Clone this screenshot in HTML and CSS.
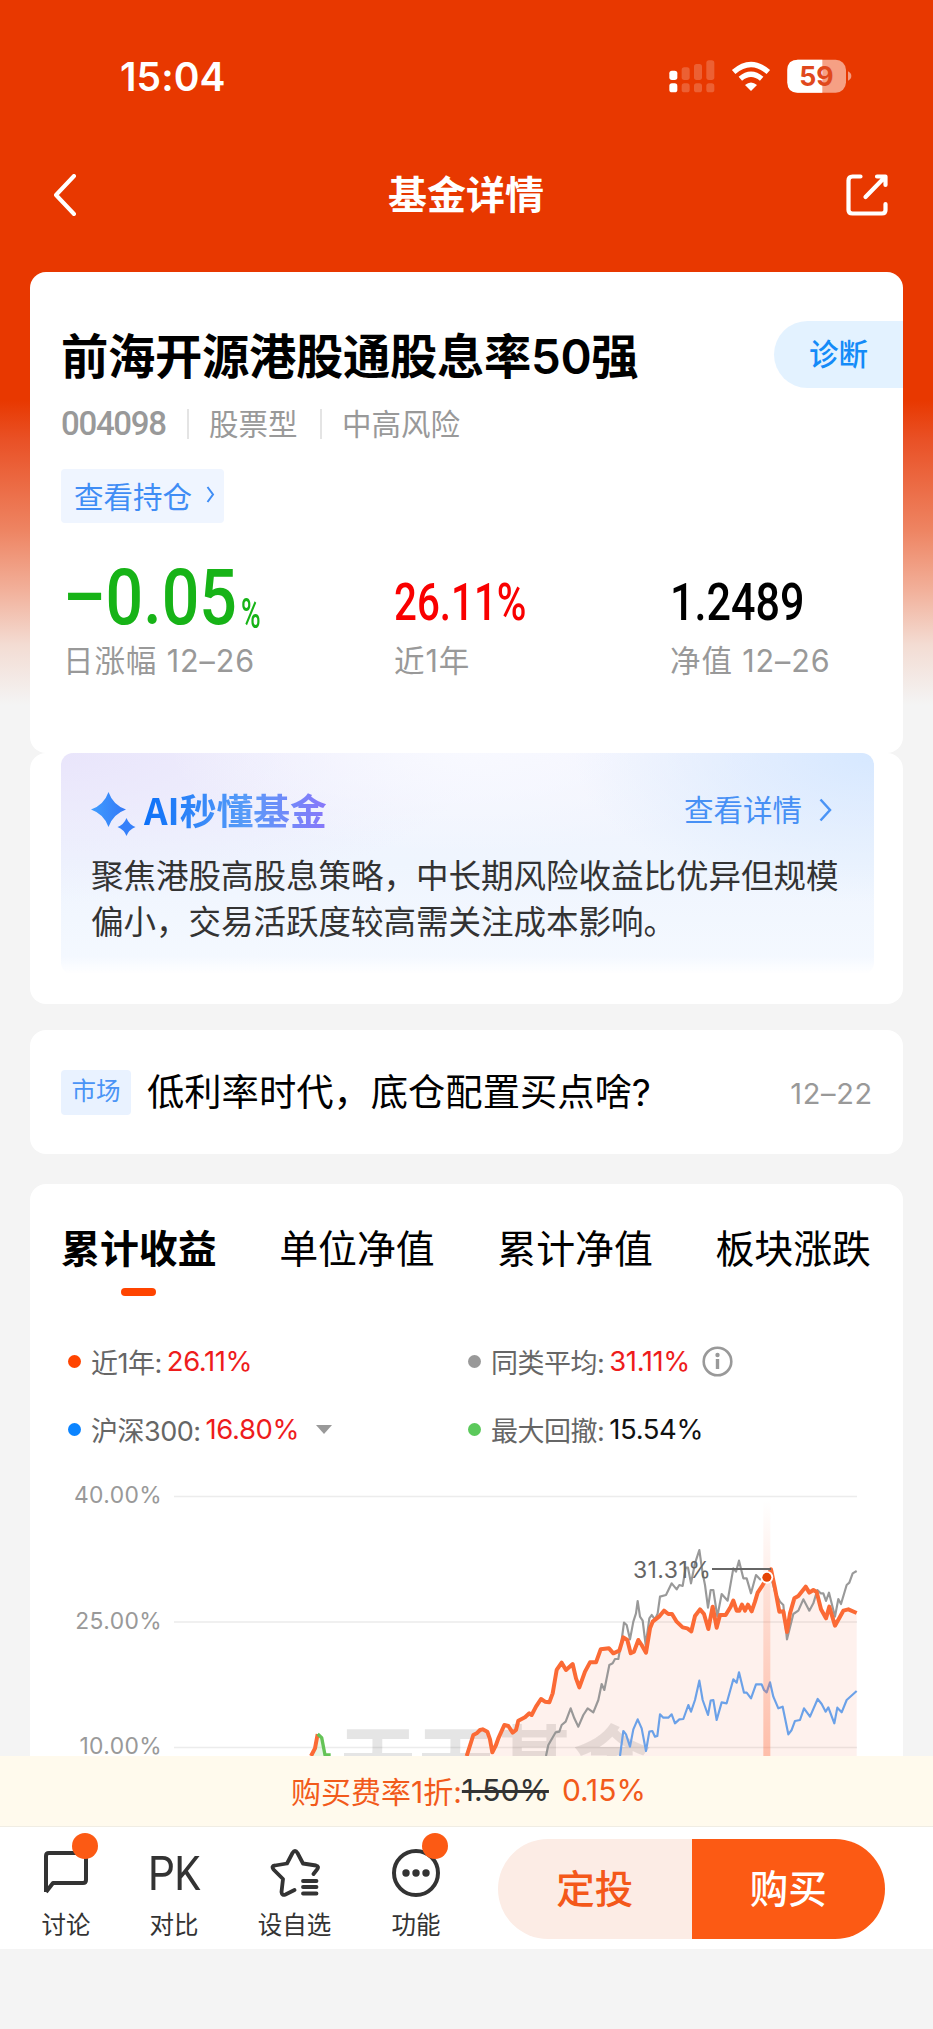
FILE: index.html
```
<!DOCTYPE html>
<html lang="zh-CN">
<head>
    <meta charset="UTF-8">
    <meta name="viewport" content="width=device-width, initial-scale=1.0">
    <title>基金详情</title>
    <link rel="stylesheet" href="styles.css">
</head>
<body>
<div class="page">
    <div class="status">
        <span class="time">15:04</span>
        <svg class="status-icons" width="187" height="34" viewBox="80 55 561 102">
            <g fill="#fff">
                <rect x="87" y="90" width="24" height="28" rx="8"/>
                <rect x="87" y="128" width="24" height="27" rx="8"/>
                <g opacity=".2">
                    <rect x="124" y="80" width="24" height="38" rx="8"/>
                    <rect x="161" y="70" width="24" height="48" rx="8"/>
                    <rect x="198" y="59" width="24" height="59" rx="8"/>
                    <rect x="124" y="128" width="24" height="27" rx="8"/>
                    <rect x="161" y="128" width="24" height="27" rx="8"/>
                    <rect x="198" y="128" width="24" height="27" rx="8"/>
                </g>
                <path d="M314 133Q332 118 350 133L332 151Z"/>
            </g>
            <path d="M280 94Q332 49 384 94M300 114Q332 87 364 114" fill="none" stroke="#fff" stroke-width="16"/>
            <rect x="441" y="57" width="176" height="99" rx="31" fill="#f6a084"/>
            <path d="M546 57H472Q441 57 441 88V125Q441 156 472 156H546Z" fill="#fff"/>
            <path d="M623 92Q633 97 633 106Q633 115 623 120Z" fill="#f49a7e"/>
            <text x="528" y="136" class="battery-text">59</text>
        </svg>
    </div>
    <div class="nav">
        <svg width="24" height="42" viewBox="0 0 24 42" fill="none" stroke="#fff" stroke-width="4" stroke-linecap="round" stroke-linejoin="round"><path d="M21 2L3 21L21 40"/></svg>
        <h1>基金详情</h1>
        <svg width="42" height="42" viewBox="0 0 42 42" fill="none" stroke="#fff" stroke-width="4.2" stroke-linecap="round" stroke-linejoin="round"><path d="M14.500 2.500H6.500Q2.500 2.500 2.500 6.500V36Q2.500 39.500 6.500 39.500H36Q39.500 39.500 39.500 36V30M31 2.500H39.500V11M38 4L19.500 23"/></svg>
    </div>

    <div class="card fund">
        <div class="fund-top">
            <h2>前海开源港股通股息率50强</h2>
            <span class="diagnose">诊断</span>
        </div>
        <div class="meta">
            <span class="code">004098</span>
            <span class="type">股票型</span>
            <span class="risk">中高风险</span>
        </div>
        <a class="holding">查看持仓
            <svg width="9" height="17" viewBox="0 0 9 17" fill="none" stroke="#3f8df5" stroke-width="2"><path d="M1.500 1L7 8.500L1.500 16"/></svg>
        </a>
        <div class="stats">
            <div class="stat">
                <div class="value green"><span class="num">–0.05</span><span class="unit">%</span></div>
                <div class="label">日涨幅 12–26</div>
            </div>
            <div class="stat">
                <div class="value red"><span class="num">26.11%</span></div>
                <div class="label">近1年</div>
            </div>
            <div class="stat">
                <div class="value"><span class="num">1.2489</span></div>
                <div class="label">净值 12–26</div>
            </div>
        </div>
    </div>

    <div class="card ai">
        <div class="ai-box">
            <div class="ai-head">
                <svg width="45" height="46" viewBox="0 0 45 46">
                    <defs>
                        <linearGradient id="star" x1="0" x2="1" y1="0" y2="0"><stop offset="0" stop-color="#3f9dff"/><stop offset="1" stop-color="#3478f6"/></linearGradient>
                    </defs>
                    <path d="M17.500 1Q22 14 35 18.500Q22 23 17.500 36Q13 23 0 18.500Q13 14 17.500 1Z" fill="url(#star)"/>
                    <path d="M35.500 27Q38 33.500 44.500 36Q38 38.500 35.500 45Q33 38.500 26.500 36Q33 33.500 35.500 27Z" fill="#3580fa"/>
                </svg>
                <strong>AI秒懂基金</strong>
                <a>查看详情</a>
                <svg class="more" width="13" height="24" viewBox="0 0 13 24" fill="none" stroke="#4a94f6" stroke-width="2.500"><path d="M1.500 1.500L11 12L1.500 22.500"/></svg>
            </div>
            <p>聚焦港股高股息策略，中长期风险收益比优异但规模偏小，交易活跃度较高需关注成本影响。</p>
        </div>
    </div>

    <div class="card news">
        <span class="tag">市场</span>
        <span class="headline">低利率时代，底仓配置买点啥?</span>
        <span class="date">12–22</span>
    </div>

    <div class="card trend">
        <div class="tabs">
            <span class="tab active">累计收益</span>
            <span class="tab">单位净值</span>
            <span class="tab">累计净值</span>
            <span class="tab">板块涨跌</span>
        </div>
        <div class="legend">
            <div class="item"><i class="dot orange"></i>近1年:<b>26.11%</b></div>
            <div class="item"><i class="dot gray"></i>同类平均:<b>31.11%</b>
                <svg class="info" width="31" height="31" viewBox="0 0 31 31"><circle cx="15.500" cy="15.500" r="13.800" fill="none" stroke="#999" stroke-width="2.600"/><path d="M15.500 13V23" stroke="#999" stroke-width="3.400"/><circle cx="15.500" cy="9" r="2.200" fill="#999"/></svg>
            </div>
            <div class="item"><i class="dot blue"></i>沪深300:<b>16.80%</b><i class="caret"></i></div>
            <div class="item"><i class="dot lime"></i>最大回撤:<b class="dark">15.54%</b></div>
        </div>
        <svg class="chart" width="812" height="286" viewBox="0 0 812 286">
            <defs>
                <linearGradient id="band" x1="0" x2="0" y1="0" y2="1"><stop offset="0" stop-color="#ff6a3c" stop-opacity="0"/><stop offset="1" stop-color="#ff6a3c" stop-opacity=".38"/></linearGradient>
            </defs>
            <g stroke="#ececec" stroke-width="1.500">
                <path d="M113 26.500H796M113 152H796M113 277.500H796"/>
            </g>
            <g class="axis">
                <text x="101" y="33">40.00%</text>
                <text x="101" y="158.500">25.00%</text>
                <text x="101" y="284">10.00%</text>
            </g>
            <text class="watermark" x="278" y="321">天天基金</text>
            <g transform="translate(399 0) scale(.33333)" fill="none" stroke-linejoin="round">
                <path fill="#f4673a" fill-opacity=".09" d="M20 858L40 795L50 790L60 780L68 778L82 785L90 808L97 847L115 805L133 765L145 768L158 788L168 780L175 752L195 742L215 735L243 687L268 697L278 670L290 600L305 578L318 600L338 582L348 625L358 652L375 605L390 577L408 577L422 538L447 535L460 550L478 542L490 502L502 510L512 550L535 510L558 548L570 475L578 455L612 422L636 432L650 455L694 484L705 438L720 418L732 432L745 477L758 410L770 473L780 435L797 435L820 392L830 422L875 424L893 368L920 325L933 298L945 355L958 425L970 424L981 486L990 430L1003 385L1037 350L1070 366L1083 418L1098 445L1108 410L1125 467L1150 422L1165 418L1190 429V858Z"/>
                <path fill="#64c356" fill-opacity=".15" d="M-447 858L-435 830L-427 792L-415 803L-405 858Z"/>
                <path stroke="#8e8e8e" stroke-opacity=".9" stroke-width="6.500" d="M258 858L265 825L287 787L298 785L305 765L317 755L332 715L343 745L355 770L370 735L383 715L400 727L415 690L425 642L433 660L448 585L458 580L465 567L475 567L485 510L492 458L500 465L510 508L520 455L528 430L533 393L540 440L548 452L557 525L568 445L575 435L585 448L593 430L600 380L618 375L635 340L650 358L658 345L668 348L677 293L684 293L693 340L705 280L718 240L728 310L735 345L744 413L752 360L760 360L772 440L785 372L803 392L820 295L828 305L837 272L850 325L860 325L873 370L888 315L900 328L933 320L945 365L960 395L970 405L981 508L1000 432L1015 422L1030 388L1048 422L1060 400L1072 360L1082 370L1090 370L1098 393L1107 368L1125 440L1135 387L1143 402L1160 345L1168 338L1178 310L1190 303"/>
                <path stroke="#6ba1e8" stroke-width="6.500" d="M480 858L490 783L498 793L510 830L520 778L533 748L545 775L558 843L568 785L577 783L585 800L592 798L600 733L610 743L625 743L635 733L645 760L658 748L670 747L685 705L693 725L705 690L718 632L728 690L744 735L752 692L760 690L770 750L785 697L800 700L820 628L830 638L837 607L852 668L860 668L873 685L888 643L905 643L912 660L920 667L930 637L940 680L955 715L968 710L985 793L995 780L1005 753L1020 750L1032 715L1050 740L1073 687L1085 702L1097 725L1105 712L1123 760L1132 713L1145 727L1160 690L1190 663"/>
                <path stroke="#fb6a35" stroke-width="12" d="M20 858L40 795L50 790L60 780L68 778L82 785L90 808L97 847L108 825L115 805L133 765L145 768L158 788L168 780L175 752L195 742L208 730L215 735L228 710L243 687L255 695L268 697L278 670L290 600L305 578L318 600L338 582L348 625L358 652L375 605L390 577L408 577L422 538L447 535L460 550L478 542L490 502L502 510L512 550L522 545L535 510L545 525L558 548L570 475L578 455L597 440L612 422L625 432L636 432L650 455L668 472L682 475L694 484L705 438L720 418L732 432L745 477L758 410L770 473L780 435L797 435L812 410L820 392L830 422L838 422L846 404L855 422L864 404L875 424L885 395L893 368L905 350L920 325L933 298L945 355L958 425L970 424L981 486L990 430L1003 385L1015 378L1037 350L1048 368L1060 360L1070 366L1083 418L1098 445L1108 410L1125 467L1140 440L1150 422L1165 418L1190 429M-447 858L-435 835L-427 792"/>
                <path stroke="#64c356" stroke-width="10" d="M-427 792L-415 803L-405 855H-388"/>
                <rect x="910" y="90" width="21" height="768" fill="url(#band)"/>
                <path stroke="#666" stroke-width="6" d="M756 297H933"/>
                <circle cx="920.500" cy="322" r="19" fill="#fff"/>
                <circle cx="920.500" cy="322" r="13.500" fill="#e64404"/>
            </g>
            <text class="peak" x="572" y="107.500">31.31%</text>
        </svg>
    </div>

    <div class="fee">购买费率1折:<del>1.50%</del><span>0.15%</span></div>
    <div class="toolbar">
        <div class="tool discuss">
            <svg width="50" height="50" viewBox="0 0 50 50" fill="none" stroke="#333" stroke-width="4" stroke-linejoin="round"><path d="M5 45V9Q5 6 8 6H42Q45 6 45 9V33Q45 36 42 36H12L5 45"/></svg>
            <i class="badge"></i>
            <span>讨论</span>
        </div>
        <div class="tool pk">
            <b>PK</b>
            <span>对比</span>
        </div>
        <div class="tool fav">
            <svg width="50" height="50" viewBox="0 0 50 50" fill="none" stroke="#333" stroke-width="3.800" stroke-linecap="round" stroke-linejoin="round"><path d="M24.500 43L15.500 47.500Q12 49 11.500 45L13 32L3.500 22.500Q1 19 5 18.500L17 16.500L22.500 6Q25 2 27.500 6L33 16.500L46 18.500Q49.500 19.500 47 22.500L43.500 27M33 34H46.500M33 40H46.500M33 46.500H46.500"/></svg>
            <span>设自选</span>
        </div>
        <div class="tool func">
            <svg width="50" height="50" viewBox="0 0 50 50"><circle cx="25" cy="26" r="22" fill="none" stroke="#333" stroke-width="4"/><g fill="#333"><circle cx="15" cy="26" r="3.700"/><circle cx="25" cy="26" r="3.700"/><circle cx="35" cy="26" r="3.700"/></g></svg>
            <i class="badge"></i>
            <span>功能</span>
        </div>
        <div class="actions">
            <button class="invest">定投</button>
            <button class="buy">购买</button>
        </div>
    </div>
</div>
</body>
</html>
```

FILE: styles.css
```
* {
    box-sizing: border-box;
}
body {
    margin: 0;
    font-family: Inter, "Noto Sans CJK SC", sans-serif;
    color: #000;
    background-color: #f4f4f4;
}
h1, h2, p {
    margin: 0;
}
svg {
    display: block;
    flex: none;
}
.page {
    width: 933px;
    height: 2029px;
    overflow: hidden;
    background: linear-gradient(#e83800 0, #e83800 400px, #e95126 440px, #ee8462 530px, #f2b09a 590px, #f3dcd3 645px, #f4f4f4 705px);
}
.status {
    height: 140px;
    padding: 12px 79px 0 120px;
    display: flex;
    align-items: center;
    justify-content: space-between;
    color: #fff;
}
.time {
    font-size: 39px;
    font-weight: 600;
    letter-spacing: 0.1px;
}
.battery-text {
    font-size: 80px;
    font-weight: 700;
    text-anchor: middle;
    fill: #e0481c;
}
.nav {
    height: 132px;
    padding: 0 45px 22px 53px;
    display: flex;
    align-items: center;
    justify-content: space-between;
    color: #fff;
}
.nav h1 {
    font-size: 39px;
    font-weight: 600;
    line-height: 44px;
    margin-left: 9px;
}
.card {
    margin: 0 30px;
    background: #fff;
    border-radius: 16px;
}
.fund {
    height: 481px;
    padding: 49px 0 0 31px;
}
.fund-top {
    display: flex;
    justify-content: space-between;
    align-items: center;
    height: 67px;
}
.fund h2 {
    font-size: 47.3px;
    line-height: 67px;
    font-weight: 600;
    letter-spacing: -0.3px;
    padding-top: 4px;
}
.diagnose {
    width: 129px;
    height: 67px;
    padding-left: 35px;
    line-height: 66px;
    font-size: 29.5px;
    font-weight: 500;
    color: #148bf8;
    background: #e3f2ff;
    border-radius: 34px 0 0 34px;
}
.meta {
    margin-top: 20px;
    height: 32px;
    display: flex;
    align-items: center;
    font-size: 29.5px;
    line-height: 32px;
    color: #999;
}
.code {
    font-family: Roboto, sans-serif;
    font-weight: 500;
    font-size: 33px;
    letter-spacing: -1.3px;
    width: 126px;
}
.type, .risk {
    border-left: 2px solid #e4e4e4;
    padding-left: 20px;
    line-height: 30px;
}
.type {
    width: 133px;
}
.holding {
    margin-top: 29px;
    width: 163px;
    height: 54px;
    padding: 0 9px 3px 13px;
    display: flex;
    align-items: center;
    justify-content: space-between;
    font-size: 29.5px;
    color: #3f8df5;
    background: #eff5ff;
    border-radius: 4px;
}
.stats {
    display: grid;
    grid-template-columns: 331px 276px 1fr;
    margin-top: 37px;
    padding-left: 2px;
}
.value {
    height: 81px;
    display: flex;
    font-family: Roboto, sans-serif;
    font-weight: 500;
    font-size: 51px;
    line-height: 86px;
    white-space: nowrap;
}
.num {
    transform: scaleX(0.845);
    transform-origin: 0 50%;
}
.red {
    color: #f90000;
}
.red .num {
    transform: scaleX(0.79);
}
.green {
    color: #17b317;
}
.green .num {
    width: 178px;
    font-size: 78px;
    line-height: 76px;
    transform: scaleX(0.85);
}
.green .unit {
    font-size: 43px;
    line-height: 107px;
    transform: scaleX(0.62);
    transform-origin: 0 50%;
}
.label {
    font-size: 30.5px;
    line-height: 40px;
    letter-spacing: 0.9px;
    color: #999;
}
.ai {
    height: 251px;
    padding: 0 29px 0 31px;
}
.ai-box {
    height: 221px;
    padding: 38px 30px 0;
    border-radius: 12px;
    background:
        linear-gradient(rgba(255, 255, 255, 0) 92%, #fff 100%),
        radial-gradient(ellipse 300px 150px at 100% 0, #d6e8ff, rgba(214, 232, 255, 0)),
        radial-gradient(ellipse 300px 100px at 50% 0, #f8f9ff, rgba(248, 249, 255, 0)),
        radial-gradient(ellipse 420px 150px at 0 0, #e9e5fb, rgba(233, 229, 251, 0)),
        linear-gradient(#f3f4fe, #eff5fe 50%, #f5f9ff);
}
.ai-head {
    display: flex;
    align-items: center;
    height: 46px;
}
.ai-head strong {
    margin-left: 8px;
    padding-bottom: 10px;
    font-family: "Noto Sans CJK SC", sans-serif;
    font-size: 36.8px;
    font-weight: 700;
    line-height: 40px;
    color: transparent;
    background: linear-gradient(90deg, #0b70f8, #589cf8 55%, #8877fa);
    -webkit-background-clip: text;
    background-clip: text;
}
.ai-head a {
    margin-left: auto;
    padding-bottom: 9px;
    font-size: 29.5px;
    line-height: 36px;
    color: #4790f5;
}
.ai-head .more {
    margin: 0 12px 8px 17px;
}
.ai p {
    margin-top: 17px;
    width: 760px;
    font-size: 32.5px;
    line-height: 46px;
    color: #333;
}
.news {
    margin-top: 26px;
    height: 124px;
    padding: 0 30px 0 31px;
    display: flex;
    align-items: center;
}
.tag {
    width: 70px;
    height: 45px;
    line-height: 43px;
    text-align: center;
    font-size: 24.5px;
    color: #4a94f6;
    background: #e9f2ff;
    border-radius: 4px;
}
.headline {
    margin-left: 16px;
    padding-top: 2px;
    font-size: 37.3px;
    line-height: 44px;
}
.date {
    margin-left: auto;
    padding-top: 2px;
    font-size: 29px;
    letter-spacing: 0.7px;
    color: #999;
}
.trend {
    margin-top: 30px;
    height: 572px;
    padding: 0 32px 0 31px;
    overflow: hidden;
    border-radius: 16px 16px 0 0;
}
.tabs {
    display: flex;
    justify-content: space-between;
    padding-top: 43px;
}
.tab {
    font-size: 38.9px;
    line-height: 44px;
}
.tab.active {
    font-weight: 700;
}
.tab.active::after {
    content: "";
    display: block;
    width: 35px;
    height: 8px;
    margin: 17px auto 0;
    border-radius: 4px;
    background: #ff4400;
}
.legend {
    display: grid;
    grid-template-columns: 400px 1fr;
    grid-auto-rows: 68px;
    margin-top: 32px;
    padding-left: 7px;
}
.item {
    display: flex;
    align-items: center;
    padding-bottom: 2px;
    font-size: 27px;
    letter-spacing: -0.5px;
    color: #666;
}
.item b {
    margin-left: 5px;
    font-weight: 400;
    font-size: 27.5px;
    letter-spacing: -0.4px;
    color: #ee1c1c;
}
.item b.dark {
    color: #111;
}
.dot {
    width: 13px;
    height: 13px;
    margin-right: 10px;
    border-radius: 50%;
}
.orange {
    background: #ff4400;
}
.gray {
    background: #999;
}
.blue {
    background: #0b84ff;
}
.lime {
    background: #5bc95b;
}
.info {
    margin-left: 12px;
}
.caret {
    margin-left: 17px;
    border: 8px solid transparent;
    border-top: 9px solid #999;
    border-bottom: 0;
}
.chart {
    margin-top: 6px;
}
.axis text {
    font-size: 22.8px;
    letter-spacing: 0.4px;
    text-anchor: end;
    fill: #999;
}
.watermark {
    font-family: "Noto Sans CJK SC", sans-serif;
    font-size: 78px;
    font-weight: 700;
    fill: #000;
    fill-opacity: 0.1;
}
.peak {
    font-size: 23px;
    letter-spacing: 0.4px;
    fill: #666;
}
.fee {
    height: 71px;
    padding: 0 0 2px 291px;
    display: flex;
    align-items: center;
    font-size: 30px;
    color: #f25a1b;
    background: #fffaed;
    border-bottom: 1px solid #f0ede4;
}
.fee del {
    color: #333;
}
.fee span {
    margin-left: 13px;
}
.toolbar {
    height: 122px;
    display: flex;
    background: #fff;
}
.tool {
    position: relative;
    padding-top: 20px;
    display: flex;
    flex-direction: column;
    align-items: center;
    font-size: 24.5px;
    line-height: 30px;
    color: #333;
}
.tool span {
    margin-top: 13px;
}
.discuss {
    width: 132px;
}
.pk {
    width: 84px;
}
.fav {
    width: 157px;
}
.func {
    width: 86px;
}
.pk b {
    height: 50px;
    font-family: Roboto, sans-serif;
    font-size: 48px;
    line-height: 54px;
    font-weight: 400;
    transform: scaleX(0.87);
}
/* red dot over the icon */
.badge {
    position: absolute;
    top: 6px;
    left: 50%;
    margin-left: 6px;
    width: 26px;
    height: 26px;
    border-radius: 50%;
    background: #fc5a14;
}
.actions {
    margin: 12px 0 0 39px;
    width: 387px;
    height: 100px;
    display: flex;
    border-radius: 50px;
    overflow: hidden;
}
.actions button {
    flex: 1;
    border: none;
    padding: 0 0 6px;
    font-family: inherit;
    font-size: 38.5px;
    font-weight: 500;
}
.invest {
    color: #f4581a;
    background: #fcece5;
}
.buy {
    color: #fff;
    background: #fc5a14;
}
```
